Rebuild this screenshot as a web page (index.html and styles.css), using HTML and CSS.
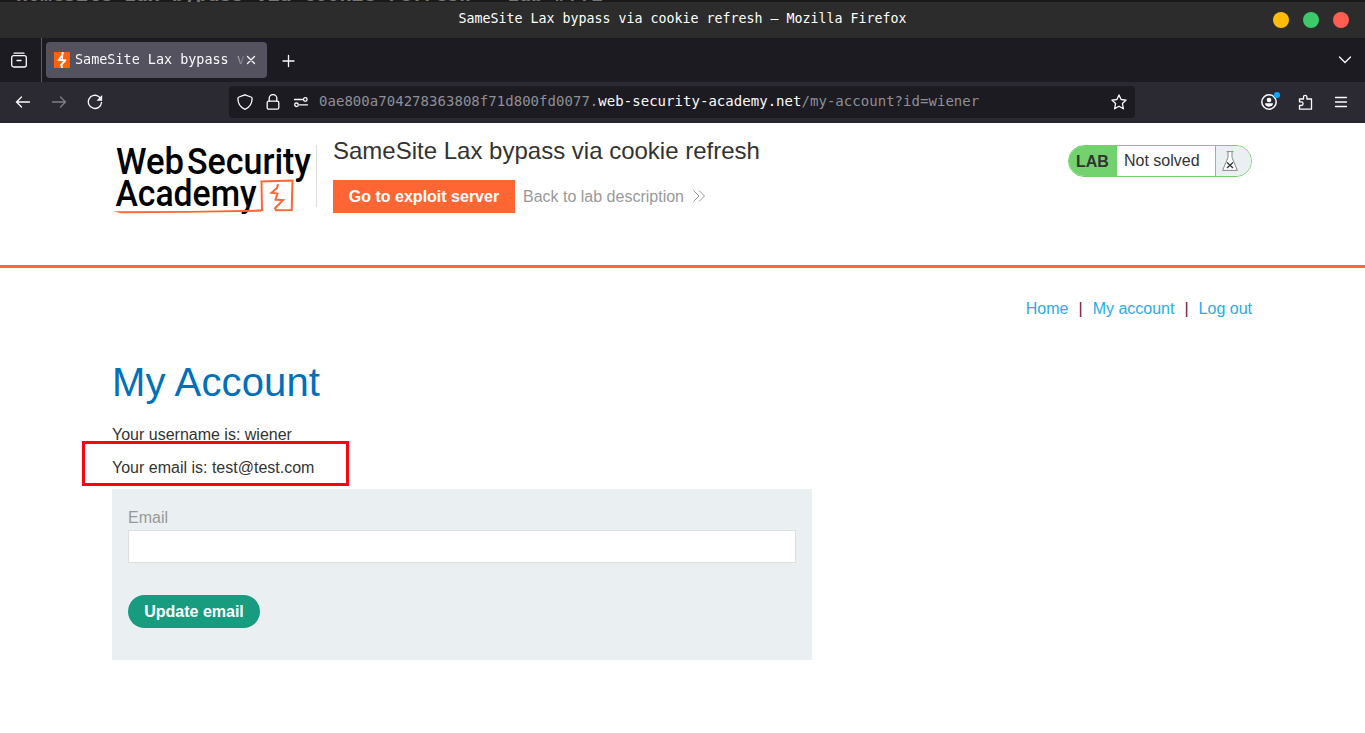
FILE: index.html
```html
<!DOCTYPE html>
<html lang="en">
<head>
<meta charset="utf-8">
<title>SameSite Lax bypass via cookie refresh</title>
<link rel="stylesheet" href="styles.css">
</head>
<body>
<div class="behind"><span>- HomeSite Lax bypass via cookie refresh - Lab #??1</span></div>
<header class="titlebar">
  <span class="window-title">SameSite Lax bypass via cookie refresh – Mozilla Firefox</span>
  <div class="window-buttons"><i class="dot yellow"></i><i class="dot green"></i><i class="dot red"></i></div>
</header>
<div class="tabs">
  <div class="tabs-view"><svg width="16" height="16" viewBox="0 0 16 16" class="ico"><path d="M3 1.2h10"/><rect x=".7" y="3.7" width="14.6" height="11.3" rx="2"/><path d="M6 8.5h4"/></svg></div>
  <div class="tab">
    <svg width="16" height="16" viewBox="0 0 16 16"><path fill="#ff6009" d="M0 0h16v16H0z"/><path fill="none" stroke="#fff" stroke-width="1.900" d="M8.700 0 8.300 3 5 7.900l5.800.4-3.600 4.400L8.100 16"/><path fill="none" stroke="#fff" stroke-width="1.200" d="m8.600 1-.3 8M7.600 12.800l4.300-4.700"/></svg>
    <span class="tab-title">SameSite Lax bypass v</span>
    <svg class="ico close" width="10" height="10" viewBox="0 0 10 10"><path d="m1.5 1.5 7 7M8.500 1.500l-7 7"/></svg>
  </div>
  <svg class="ico plus" width="14" height="14" viewBox="0 0 14 14"><path d="M6.500 1.500v11M1 7h11"/></svg>
  <svg class="ico chevron" width="14" height="8" viewBox="0 0 14 8"><path d="m1.500 1 5.500 5.500L12.500 1"/></svg>
</div>
<div class="toolbar">
  <div class="nav">
    <svg class="ico" width="16" height="16" viewBox="0 0 16 16"><path d="M1.5 8H14.500M6.500 3l-5 5 5 5"/></svg>
    <svg class="ico dim" width="16" height="16" viewBox="0 0 16 16"><path d="M14.500 8H1.500M9.500 3l5 5-5 5"/></svg>
    <svg class="ico" width="16" height="16" viewBox="0 0 16 16"><path d="M14.500 8.500A6.600 6.600 0 1 1 12 2.700L14 5"/><path fill="#fbfbfe" stroke="none" d="M15.200 1v5.700H9.500z"/></svg>
  </div>
  <div class="urlbar">
    <svg class="ico" width="16" height="16" viewBox="0 0 16 16"><path d="M8 .8 14 3c.8.300 1.100.700 1.100 1.400 0 5-2.300 8.700-7.100 10.900C3.200 13.100.900 9.400.9 4.400.9 3.700 1.200 3.300 2 3z"/></svg>
    <svg class="ico" width="16" height="16" viewBox="0 0 16 16"><rect x="2.200" y="7.200" width="11.600" height="8" rx="1.500"/><path d="M4.200 7V4.300a3.800 3.800 0 0 1 7.600 0V7"/></svg>
    <svg class="ico" width="16" height="16" viewBox="0 0 16 16"><path d="M1.500 5.500h8M6.500 10.800h8"/><circle cx="12.300" cy="5.500" r="1.800"/><circle cx="3.500" cy="10.800" r="1.800"/></svg>
    <span class="url">0ae800a704278363808f71d800fd0077.<b>web-security-academy.net</b>/my-account?id=wiener</span>
    <svg class="ico star" width="16" height="16" viewBox="0 0 16 16"><path stroke-linejoin="round" d="m8 .9 2.100 4.600 5 .6-3.700 3.400 1 5.300L8 12.200l-4.400 2.600 1-5.300L.9 6.100l5-.6z"/></svg>
  </div>
  <div class="actions">
    <svg class="ico" width="20" height="20" viewBox="0 0 20 20"><circle cx="8" cy="12" r="7.200" stroke-width="1.500"/><circle cx="8" cy="10" r="2.300" fill="#fbfbfe" stroke="none"/><path fill="#fbfbfe" stroke="none" d="M4 13.300h8c0 2-1.800 3.400-4 3.400s-4-1.400-4-3.400z"/><circle cx="16" cy="5" r="3.100" fill="#00a8ff" stroke="none"/></svg>
    <svg class="ico" width="16" height="16" viewBox="0 0 16 16"><path stroke-linejoin="round" d="M2.500 15.200V11.500h1.800a1.800 1.800 0 0 0 0-3.600H2.500V5h4V3a1.700 1.700 0 0 1 3.400 0v2h4.600v10.200z"/></svg>
    <svg class="ico" width="14" height="12" viewBox="0 0 14 12"><path d="M1.500 1.500h11M1.500 6h11M1.500 10.500h11"/></svg>
  </div>
</div>
<main>
  <section class="lab-header">
    <svg class="logo" width="205" height="74" viewBox="0 0 205 74">
      <g class="logo-text"><text x="4" y="33" textLength="68" lengthAdjust="spacingAndGlyphs">Web</text><text x="75" y="33" textLength="124" lengthAdjust="spacingAndGlyphs">Security</text><text x="3.500" y="65" textLength="141" lengthAdjust="spacingAndGlyphs">Academy</text></g>
      <path fill="#ff6633" d="M1 70.200q75 .2 148-1.700v2.200q-75 1.200-140 1.500z"/>
      <path fill="none" stroke="#ff6633" stroke-width="2" d="M150 70 149.500 40.500l31-1-.8 29.500-15.700.2-1-2 8-8-7.500-.5 2-6.200-6-.7 5.500-4.800 1-4"/>
    </svg>
    <div class="lab-info">
      <h2>SameSite Lax bypass via cookie refresh</h2>
      <div class="lab-links"><a class="exploit">Go to exploit server</a><a class="back">Back to lab description</a><svg width="12" height="12" viewBox="0 0 12 12"><path fill="none" stroke="#999" d="m.5.500 5.500 5.500-5.500 5.500M6 .5 11.500 6 6 11.500"/></svg></div>
    </div>
    <div class="status"><strong>LAB</strong><span>Not solved</span><i><svg width="16" height="20" viewBox="0 0 16 20"><path fill="#fff" stroke="#888" d="M4.500.6h7M6 1v5.500L.6 19.400h14.800L10 6.500V1"/><path stroke="#333" stroke-width="1.300" d="m5 11.500 6 5.500m0-5.500L5 17"/></svg></i></div>
  </section>
  <section class="account">
    <nav><a>Home</a><span>|</span><a>My account</a><span>|</span><a>Log out</a></nav>
    <h1>My Account</h1>
    <p>Your username is: wiener</p>
    <p class="email">Your email is: test@test.com<span class="marker"></span></p>
    <form><label for="email">Email</label><input id="email" type="email"><button type="button">Update email</button></form>
  </section>
</main>
</body>
</html>
```
FILE: styles.css
```css
* { box-sizing: border-box; }
body { margin: 0; height: 733px; overflow: hidden; background: #fff; color: #333332; font: 16px/20px "Liberation Sans", Arial, sans-serif; }
svg { display: block; flex: none; }
.ico { fill: none; stroke: #fbfbfe; stroke-width: 1.3; stroke-linecap: round; }
.behind { display: flex; align-items: flex-end; height: 2px; overflow: hidden; background: #191919; color: #777; font: bold 19.9px/15px "DejaVu Sans Mono", monospace; white-space: pre; }
.behind span { margin-left: -8px; }
.titlebar { display: grid; grid-template-columns: 1fr auto 1fr; align-items: center; height: 36px; background: #2c2c2c; color: #fff; font: 13.29px/16px "DejaVu Sans Mono", monospace; }
.window-title { grid-column: 2; white-space: pre; padding-bottom: 3px; }
.window-buttons { display: flex; justify-content: flex-end; gap: 14px; padding-right: 16px; }
.dot { width: 16px; height: 16px; border-radius: 50%; }
.yellow { background: #ffbd0a; }
.green { background: #3bc96a; }
.red { background: #ff5f52; }
.tabs { display: flex; align-items: center; height: 44px; background: #1c1b22; }
.tabs-view { display: flex; align-items: center; justify-content: center; width: 42px; height: 44px; border-right: 1px solid #5b5b63; padding-right: 4px; }
.tab { display: flex; align-items: center; width: 221px; height: 36px; margin-left: 4px; padding: 0 11px 0 8px; border-radius: 4px; background: #53525e; }
.tab-title { flex: 1; margin-left: 5px; overflow: hidden; white-space: pre; color: #fbfbfe; font: 13.45px/18px "DejaVu Sans Mono", monospace; -webkit-mask-image: linear-gradient(90deg, #000 153px, transparent 172px); mask-image: linear-gradient(90deg, #000 153px, transparent 172px); }
.plus { margin-left: 15px; margin-top: 1px; }
.chevron { margin-left: auto; margin-right: 13px; }
.toolbar { display: flex; align-items: center; height: 41px; padding-left: 15px; background: #2b2a33; border-bottom: 1px solid #25242c; }
.nav { display: flex; gap: 20px; width: 214px; }
.dim { opacity: .4; }
.urlbar { display: flex; align-items: center; gap: 12px; width: 906px; height: 32px; padding: 0 8px; border-radius: 4px; background: #1c1b22; }
.url { margin-left: -2px; padding-bottom: 2px; color: #8f8f96; font: 14px/18px "DejaVu Sans Mono", monospace; letter-spacing: .036px; white-space: pre; }
.url b { color: #fbfbfe; font-weight: 400; }
.star { margin-left: auto; }
.actions { display: flex; align-items: center; margin-left: 126px; gap: 16px; }
.actions svg:first-child { margin-top: -4px; }
.actions svg:last-child { margin-left: 5px; }
.lab-header { display: flex; align-items: flex-start; height: 145px; padding: 18px 113px 0 112px; border-bottom: 3px solid #ff6633; }
.logo { overflow: visible; }
.logo-text { fill: #000; font: 500 37px Roboto, sans-serif; }
.lab-info { padding-left: 16px; position: relative; }
.lab-info::before { content: ""; position: absolute; left: -1px; top: 4px; width: 1px; height: 62px; background: #ddd; }
h2 { margin: -4px 0 0; font-size: 24px; font-weight: 400; line-height: 28px; white-space: nowrap; }
.lab-links { display: flex; align-items: center; margin-top: 15px; color: #999; white-space: nowrap; }
.lab-links svg { margin-top: -2px; }
.exploit { width: 182px; height: 33px; margin-right: 8px; text-align: center; line-height: 33px; background: #ff6633; color: #fff; font-weight: 700; }
.back { margin-right: 9px; }
.status { display: flex; width: 184px; height: 32px; margin: 4px 0 0 auto; overflow: hidden; border: 1px solid #72d36e; border-radius: 16px; line-height: 30px; white-space: nowrap; }
.status strong { width: 48px; background: #72d36e; padding: 1px 0 0 7px; }
.status span { flex: 1; padding: 0 0 0 7px; }
.status i { display: flex; align-items: center; width: 36px; padding-left: 6px; border-left: 1px solid #72d36e; background: #eaeff2; }
.account { padding: 31px 113px 0 112px; }
nav { display: flex; justify-content: flex-end; gap: 10px; color: #5d2333; }
nav a { color: #29abe8; }
h1 { margin: 40px 0 0; color: #0070bb; font-size: 40px; line-height: 46px; font-weight: 400; letter-spacing: .13px; }
p { margin: 20px 0 0; line-height: 20px; }
.email { position: relative; margin-top: 13px; }
.marker { position: absolute; left: -30px; top: -17px; width: 267px; height: 45px; border: 3px solid #f90707; }
form { display: flex; flex-direction: column; align-items: flex-start; width: 700px; height: 171px; margin-top: 11px; padding: 19px 16px 0; background: #eaeff2; }
label { color: #999; }
input { width: 668px; height: 33px; margin: 2px 0 0; border: 1px solid #dedede; background: #fff; }
button { width: 132px; height: 33px; margin-top: 32px; padding: 0; border: 0; border-radius: 17px; color: #fff; background: #179c80; font: bold 16px "Liberation Sans", Arial, sans-serif; }
```
